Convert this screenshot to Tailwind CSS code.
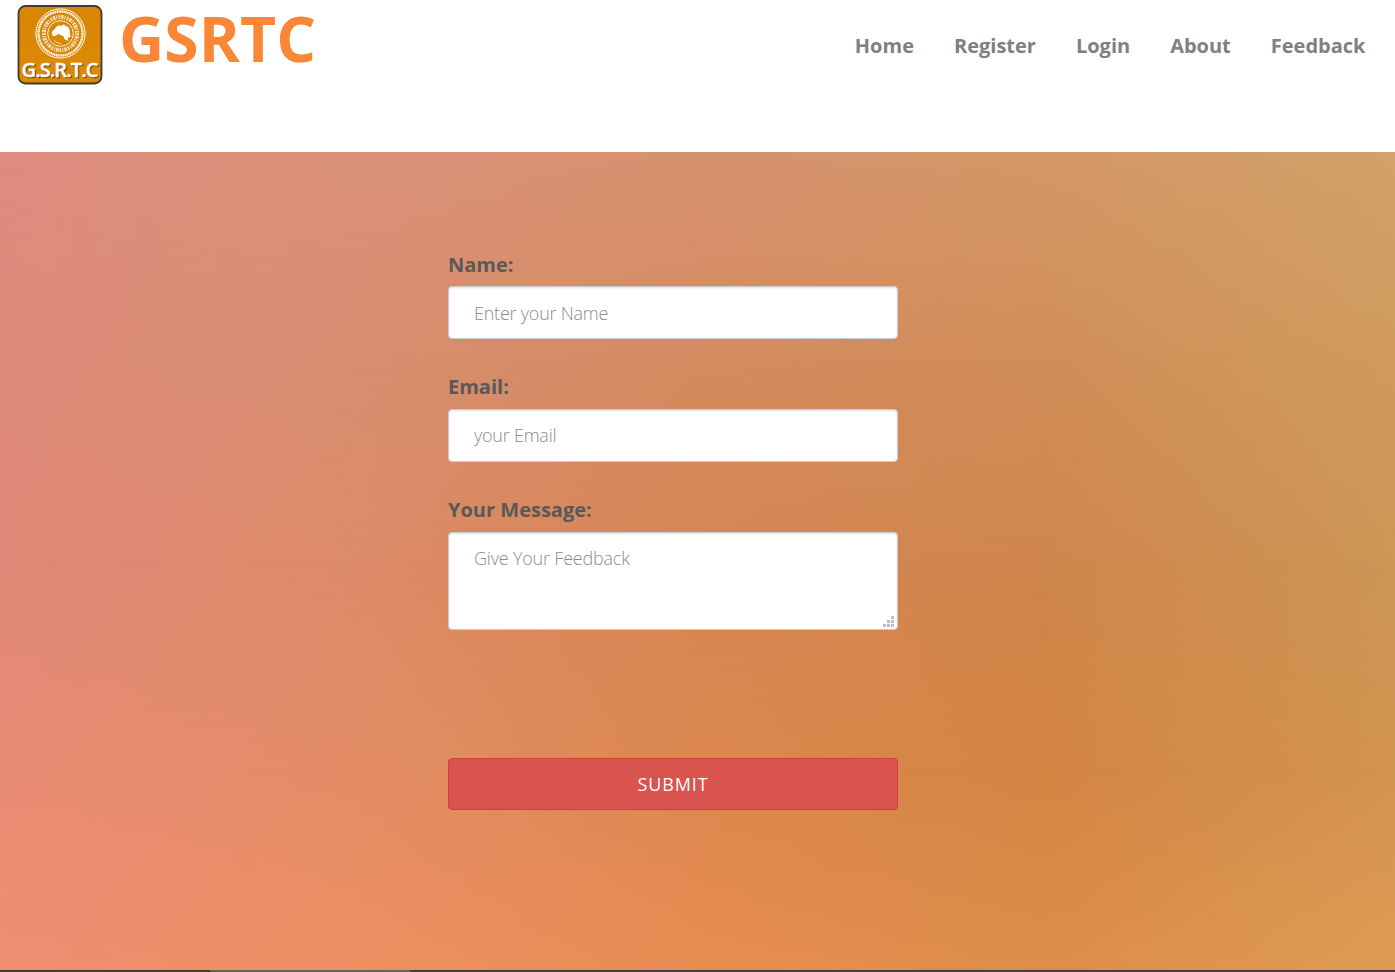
<!DOCTYPE html>
<html lang="en">
<head>
<meta charset="utf-8">
<title>GSRTC</title>
<script src="https://cdn.jsdelivr.net/npm/@tailwindcss/browser@4"></script>
</head>
<body class="h-[972px] overflow-hidden bg-white font-['Open_Sans',sans-serif] flex flex-col">
<header class="h-[152px] shrink-0 flex items-start justify-between pl-[17px] pr-[29.5px]">
  <a class="flex items-start" href="#">
    <svg class="mt-[5px]" width="86" height="80" viewBox="0 0 86 80" font-family="'Open Sans',sans-serif">
      <defs>
        <linearGradient id="g" x1="0" y1="0" x2="0" y2="1"><stop offset="0" stop-color="#d98504"/><stop offset="1" stop-color="#dc8a06"/></linearGradient>
      </defs>
      <rect x="1.5" y="1" width="83" height="77.5" rx="7" fill="url(#g)" stroke="#403a32" stroke-width="1.8"/>
      <g fill="none" stroke="#fff">
        <circle cx="43.500" cy="28.500" r="24.600" stroke-width="1"/>
        <circle cx="43.500" cy="28.500" r="22" stroke-width="2.400" stroke-dasharray="1.300 .5"/>
        <circle cx="43.500" cy="28.500" r="16.600" stroke-width="4" stroke-dasharray="1.800 .9 2.600 .8 1.100 1.200" opacity=".7"/>
        <circle cx="43.500" cy="28.500" r="12.800" stroke-width=".9"/>
      </g>
      <path d="M39 22l2-1.500 3.500.3 2.500-1.500 1.200 1.500c3.200.5 4.600 3 4.600 6 0 2 .2 3.500 1 5.200l-3 .3.2 3.500-3.200-1.200-1.300-3.300-2.500-1-2.500-1.500c-1 1.300-2.500 2-4.300 2.200l-2.200-.6.4-1.600-.8-1.200c.5-1.800 2.500-2.300 3.300-3.600z" fill="#fff"/>
      <path d="M37 35.500c2 2 4 2.800 7 2.800" fill="none" stroke="#fff" stroke-width="1" opacity=".7"/>
      <text x="5.500" y="73" textLength="76" lengthAdjust="spacingAndGlyphs" font-size="19" font-weight="600" stroke="#6b4510" stroke-width=".4" fill="#6b4510" letter-spacing="-.9">G.S.R.T.C</text>
      <text x="4.500" y="72" textLength="76" lengthAdjust="spacingAndGlyphs" font-size="19" font-weight="600" stroke="#fff" stroke-width=".4" fill="#fff" letter-spacing="-.9">G.S.R.T.C</text>
    </svg>
    <span class="ml-[16px] pr-2 text-[62.5px] leading-[76px] font-bold text-[#f98737]">GSRTC</span>
  </a>
  <nav class="mt-[31px] flex gap-[40px] text-[20px] leading-[30px] font-bold text-[#808080]">
    <a href="#">Home</a><a href="#">Register</a><a href="#">Login</a><a href="#">About</a><a href="#">Feedback</a>
  </nav>
</header>
<main class="grid h-[818px] shrink-0">
  <div class="col-start-1 row-start-1 bg-[linear-gradient(90deg,#df8b7f,#d99278_25%,#d6926f_50%,#d49766_75%,#d2a36a)]"></div>
  <div class="col-start-1 row-start-1 bg-[linear-gradient(90deg,#dd8b7b,#d88d70_25%,#d58b60_50%,#d08e58_75%,#cf9b5c)] [mask-image:linear-gradient(transparent,black_25%)]"></div>
  <div class="col-start-1 row-start-1 bg-[linear-gradient(90deg,#e08878,#dc8b68_25%,#d58653_50%,#cf864c_75%,#cc9655)] [mask-image:linear-gradient(transparent_25%,black_50%)]"></div>
  <div class="col-start-1 row-start-1 bg-[linear-gradient(90deg,#e88b74,#e38c66_25%,#dc874f_50%,#d38542_75%,#d19450)] [mask-image:linear-gradient(transparent_50%,black_75%)]"></div>
  <div class="col-start-1 row-start-1 bg-[linear-gradient(90deg,#f08e72,#ed9062_25%,#e78c52_50%,#dd8e48_75%,#de9b52)] [mask-image:linear-gradient(transparent_75%,black)]"></div>
  <form class="col-start-1 row-start-1 z-10 ml-[448px] w-[450px] pt-[98px] flex flex-col text-[20px] text-[#595959]">
    <label class="h-[36px] leading-[30px] font-bold" for="n">Name:</label>
    <input id="n" placeholder="Enter your Name" class="block h-[53px] w-full rounded border border-[#ccc] bg-white px-[25px] text-[18px] font-light tracking-[-0.23px] placeholder:text-[#8c8c8c] shadow-[inset_0_1px_2px_rgba(0,0,0,0.12)]">
    <label class="mt-[33px] h-[37px] leading-[30px] font-bold" for="e">Email:</label>
    <input id="e" placeholder="your Email" class="block h-[53px] w-full rounded border border-[#ccc] bg-white px-[25px] pb-[2px] text-[18px] font-light tracking-[-0.23px] placeholder:text-[#8c8c8c] shadow-[inset_0_1px_2px_rgba(0,0,0,0.12)]">
    <label class="mt-[33px] h-[37px] leading-[30px] font-bold" for="m">Your Message:</label>
    <div class="relative h-[98px]">
      <textarea id="m" placeholder="Give Your Feedback" class="block size-full resize-none rounded border border-[#ccc] bg-white px-[25px] py-[12px] text-[18px] leading-[26px] font-light tracking-[-0.2px] placeholder:text-[#8c8c8c] shadow-[inset_0_1px_2px_rgba(0,0,0,0.12)]"></textarea>
      <svg class="absolute right-[4px] bottom-[3px]" width="11" height="11" fill="#bfbfbf" shape-rendering="crispEdges"><path d="M8 0h3v3h-3zM4 4h3v3h-3zM8 4h3v3h-3zM0 8h3v3h-3zM4 8h3v3h-3zM8 8h3v3h-3z"/></svg>
    </div>
    <button class="mt-[128px] h-[52px] rounded border border-[#d43f3a] bg-[#d9534f] text-[18px] tracking-[0.9px] text-white">SUBMIT</button>
  </form>
</main>
<footer class="h-[2px] shrink-0 bg-[#463b37] flex"><div class="ml-[210px] h-full w-[200px] bg-[#66635f]"></div></footer>
</body>
</html>
